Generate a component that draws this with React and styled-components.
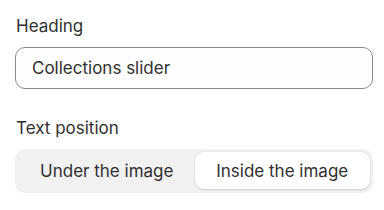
import React, { useState } from "react";
import styled, { createGlobalStyle } from "styled-components";

const GlobalStyle = createGlobalStyle`
  body {
    margin: 0;
    background: #ffffff;
    font-family: Inter, "Noto Sans", sans-serif;
    color: #303030;
  }
`;

const Panel = styled.div`
  width: 384px;
  height: 210px;
  padding: 15px 11px 0 15px;
  box-sizing: border-box;
  display: flex;
  flex-direction: column;
`;

const Field = styled.div`
  display: flex;
  flex-direction: column;
  margin-bottom: ${(p) => p.$gap || 0}px;
`;

const Label = styled.label`
  font-size: 17px;
  line-height: 22px;
  padding-left: 1px;
  margin-bottom: 10px;
  color: #303030;
`;

const Input = styled.input`
  height: 42px;
  box-sizing: border-box;
  padding: 0 16px;
  border: 1px solid #8a8a8a;
  border-radius: 10px;
  background: #fdfdfd;
  font-family: Inter, "Noto Sans", sans-serif;
  font-size: 17px;
  color: #303030;
  outline: none;
`;

const Segmented = styled.div`
  height: 44px;
  box-sizing: border-box;
  padding: 3px 3px 4px 4px;
  border-radius: 10px;
  background: #f1f1f1;
  display: grid;
  grid-template-columns: 1fr 1fr;
`;

const Segment = styled.button`
  border: none;
  border-radius: 9px;
  font-family: Inter, "Noto Sans", sans-serif;
  font-size: 17px;
  color: #303030;
  cursor: pointer;
  background: ${(p) => (p.$active ? "#ffffff" : "transparent")};
  box-shadow: ${(p) =>
    p.$active ? "0 1px 2px rgba(0,0,0,0.12), 0 0 0 1px rgba(0,0,0,0.03)" : "none"};
`;

const options = ["Under the image", "Inside the image"];

const App = () => {
  const [active, setActive] = useState(1);
  return (
    <>
      <GlobalStyle />
      <Panel>
        <Field $gap={28}>
          <Label>Heading</Label>
          <Input defaultValue="Collections slider" />
        </Field>
        <Field>
          <Label>Text position</Label>
          <Segmented>
            {options.map((o, i) => (
              <Segment key={o} $active={i === active} onClick={() => setActive(i)}>
                {o}
              </Segment>
            ))}
          </Segmented>
        </Field>
      </Panel>
    </>
  );
};

export default App;
